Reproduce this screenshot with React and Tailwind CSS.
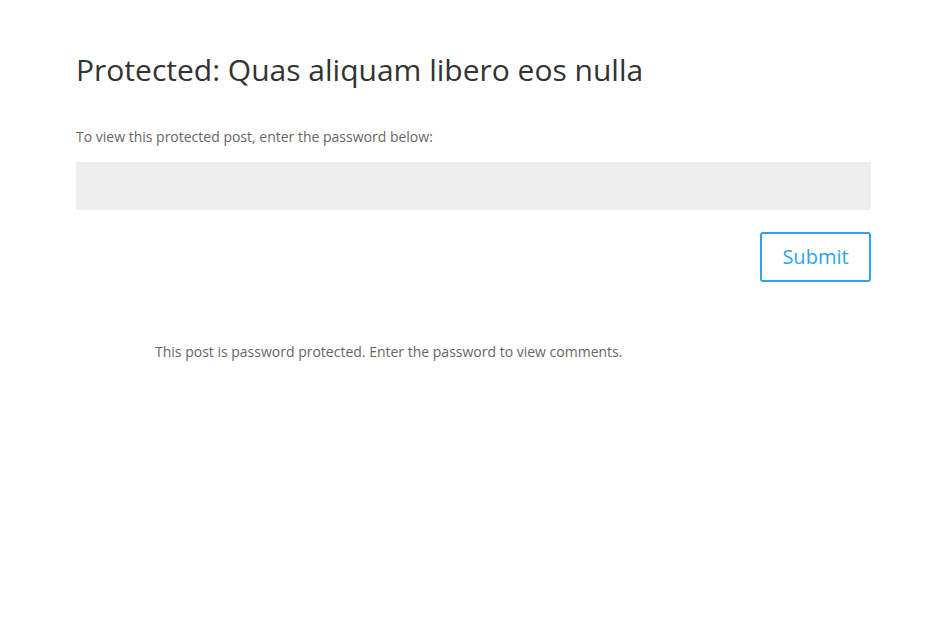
import React from 'react';

const App = () => {
  return (
    <div className="min-h-[637px] bg-white font-['Open_Sans',sans-serif]">
      <div className="w-[795px] ml-[76px] pt-[55px]">
        <h1 className="text-[30px] leading-[30px] text-[#333] font-normal">
          Protected: Quas aliquam libero eos nulla
        </h1>

        <form className="mt-[40px]" onSubmit={(e) => e.preventDefault()}>
          <p className="text-[14px] leading-[24px] text-[#666]">
            To view this protected post, enter the password below:
          </p>
          <input
            type="password"
            className="mt-[13px] block w-full h-[48px] bg-[#eee] outline-none px-4 text-[14px] text-[#666]"
          />
          <div className="flex justify-end mt-[22px]">
            <button
              type="submit"
              className="w-[111px] h-[50px] border-2 border-[#2ea3f2] rounded-[3px] text-[20px] text-[#2ea3f2] bg-white"
            >
              Submit
            </button>
          </div>
        </form>

        <p className="mt-[58px] ml-[79px] text-[14px] leading-[24px] text-[#666]">
          This post is password protected. Enter the password to view comments.
        </p>
      </div>
    </div>
  );
};

export default App;
